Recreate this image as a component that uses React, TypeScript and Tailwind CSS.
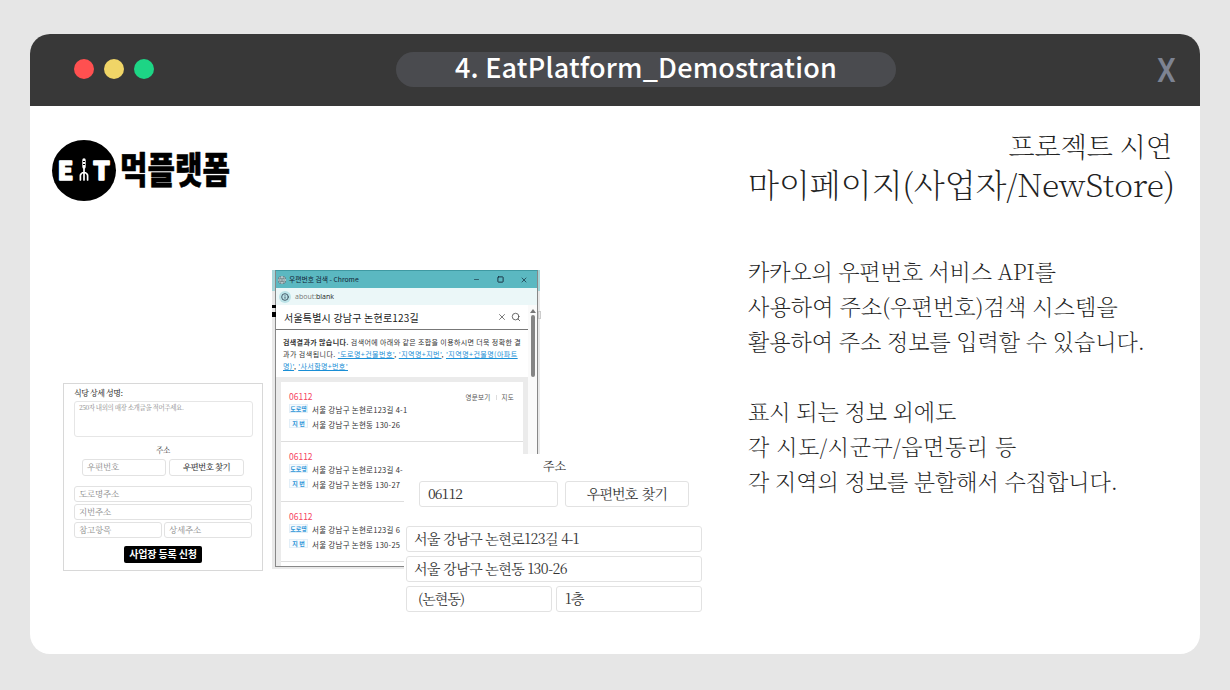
import type { ReactNode } from "react";
import { Info, Search, X, Minus, Square, Globe } from "lucide-react";

const sans = "font-['Noto_Sans_CJK_KR','Noto_Sans',sans-serif]";
const serif = "font-['Noto_Serif_CJK_KR','Liberation_Serif','Noto_Sans_CJK_KR',serif]";
const light = "font-['Noto_Serif_CJK_KR','Noto_Sans_CJK_KR',sans-serif] font-extralight";

function Field({ className = "", children }: { className?: string; children: ReactNode }) {
  return (
    <div className={`flex items-center whitespace-nowrap rounded-[3px] border border-[#e2e2e2] bg-white pb-[2px] ${className}`}>
      {children}
    </div>
  );
}

function Header() {
  return (
    <header className="flex h-[72px] shrink-0 items-center bg-[#383838] pb-[2px] pl-11 pr-[24px]">
      <div className="flex w-[322px] gap-[10px]">
        <span className="size-5 rounded-full bg-[#ff5050]" />
        <span className="size-5 rounded-full bg-[#f0d567]" />
        <span className="size-5 rounded-full bg-[#1dd585]" />
      </div>
      <div className="flex h-[35px] w-[500px] items-center justify-center rounded-full bg-[#4a4b4f] pb-[5px] text-[27px] font-medium leading-none tracking-[0.2px] text-white">
        <span className="whitespace-nowrap">4. EatPlatform_Demostration</span>
      </div>
      <span className="ml-auto origin-right scale-x-90 pt-[2px] font-['Roboto',sans-serif] text-[33px] font-medium leading-none text-[#7d8392]">X</span>
    </header>
  );
}

function Logo() {
  return (
    <div className="ml-[22px] mt-[34px] flex h-[61px] items-center">
      <svg className="h-[61px] w-[180px] overflow-visible" viewBox="0 0 180 61">
        <ellipse cx="32" cy="30.500" rx="32" ry="30.500" fill="#000" />
        <g fill="#fff" stroke="#fff" strokeWidth="1.400" strokeLinejoin="round" fontFamily="Noto Sans CJK KR, sans-serif" fontWeight="900" fontSize="25">
          <text x="5.500" y="40" textLength="16" lengthAdjust="spacingAndGlyphs">E</text>
          <text x="41" y="40" textLength="17" lengthAdjust="spacingAndGlyphs">T</text>
        </g>
        <g fill="none" stroke="#fff" strokeLinecap="round" strokeLinejoin="round">
          <path d="M32 20v7" strokeWidth="3.400" />
          <path d="M32 27v13M28.400 40v-4.500q0-2 3.600-3.500q3.600 1.500 3.600 3.500V40" strokeWidth="1.700" />
        </g>
        <path d="M31 21.500h2M31 24.500h2" stroke="#000" strokeWidth="1" />
        <text x="68" y="43.500" fontFamily="Noto Sans CJK KR, sans-serif" fontWeight="900" fontSize="37" stroke="#000" strokeWidth="0.500" strokeLinejoin="round" textLength="110" lengthAdjust="spacingAndGlyphs">먹플랫폼</text>
      </svg>
    </div>
  );
}

function RegisterForm() {
  return (
    <div className={`ml-[33px] mt-[113px] flex h-[188px] w-[200px] shrink-0 flex-col border border-[#d8d8d8] bg-white px-[10px] text-[8.500px] leading-none tracking-[-0.2px] text-[#888] ${serif}`}>
      <div className="mt-[4px] text-[8px] font-medium leading-[9px] tracking-[-0.5px] text-[#333]">식당 상세 성명:</div>
      <div className="mt-[4px] h-[36px] w-[179px] rounded-[3px] border border-[#e6e6e6] px-1 pt-[3px] text-[6.500px] tracking-[-0.4px] text-[#888]">250자 내외의 매장 소개글을 적어주세요.</div>
      <div className="mt-[8px] text-center text-[7.500px] leading-[9px] text-[#333]">주소</div>
      <div className="ml-[8px] mt-[5px] flex gap-[3px]">
        <Field className="h-[17px] w-[84px] pl-1">우편번호</Field>
        <Field className="h-[17px] w-[75px] justify-center font-medium tracking-[-0.6px] text-[#333]">우편번호 찾기</Field>
      </div>
      <div className="mt-[10px] flex w-[178px] flex-col gap-[2px]">
        <Field className="h-[16px] pl-1">도로명주소</Field>
        <Field className="h-[16px] pl-1">지번주소</Field>
        <div className="flex gap-[2px]">
          <Field className="h-[16px] w-[88px] pl-1">참고항목</Field>
          <Field className="h-[16px] w-[88px] pl-1">상세주소</Field>
        </div>
      </div>
      <div className="mx-auto mt-[8px] flex h-[17px] w-[78px] items-center justify-center whitespace-nowrap rounded-[2px] bg-black pb-[2px] font-['Noto_Sans_CJK_KR',sans-serif] text-[10px] font-bold tracking-[-0.15px] text-white">사업장 등록 신청</div>
    </div>
  );
}

function Tag({ children }: { children: ReactNode }) {
  return (
    <span className="mb-[2px] flex h-[9px] w-[19px] items-center justify-center whitespace-nowrap border border-[#e3eff8] bg-[#f7fbfe] text-[6px] font-bold leading-none tracking-normal text-[#2a94d8]">{children}</span>
  );
}

function Result({ road, lot, links = false }: { road: string; lot: string; links?: boolean }) {
  return (
    <div className="h-[60px] border-b border-[#dedede] pl-2 pr-[9px] pt-[9px] text-[7.500px] leading-none tracking-[0.27px] text-[#333]">
      <div className="flex h-[11px] items-center justify-between">
        <span className="pb-px text-[8.500px] tracking-normal text-[#f5455f]">06112</span>
        {links && <span className="flex items-center gap-[5px] pt-px text-[6.500px] text-[#555]">영문보기 <i className="h-[5px] w-px bg-[#ddd]" /> 지도</span>}
      </div>
      <div className="flex h-[15px] items-center gap-1 whitespace-nowrap"><Tag>도로명</Tag>{road}</div>
      <div className="flex h-[15px] items-center gap-1 whitespace-nowrap"><Tag>지 번</Tag>{lot}</div>
    </div>
  );
}

function Popup() {
  return (
    <div className="relative ml-[9px] flex h-[299px] w-[268px] shrink-0 flex-col border-b-2 border-l-[3px] border-r-2 border-[#e9e9e9]">
      <span className="absolute -left-[3px] top-0 h-[21px] w-[3px] bg-[#a5d5d9]" />
      <span className="absolute -right-[2px] top-0 h-[21px] w-[2px] bg-[#a5d5d9]" />
      <span className="absolute -left-[3px] top-[35px] h-[3px] w-[4px] bg-black" />
      <span className="absolute -left-[3px] top-[42px] h-[5px] w-[4px] bg-black" />
      <span className="absolute -right-[3px] top-[41px] h-[8px] w-[3px] border border-[#ccc]" />
      <div className="flex h-full flex-col overflow-hidden border border-[#888] border-t-[#3f99a2] bg-white text-[#333]">
        <div className="flex h-[17px] shrink-0 items-center bg-[#5bb8c1] pl-[2px] pr-[9px] text-[#123]">
          <Globe className="size-[8px] rounded-full bg-[#59656b] text-[#d7eef0]" strokeWidth={2} />
          <span className="ml-[3px] whitespace-nowrap text-[6.800px]">우편번호 검색 - Chrome</span>
          <Minus className="ml-auto size-[7px]" />
          <Square className="ml-[17px] size-[7px]" strokeWidth={3} />
          <X className="ml-[16px] size-[8px]" />
        </div>
        <div className="flex h-[17px] shrink-0 items-center bg-[#ebf7f8] pl-[3px] text-[7px]">
          <span className="rounded-full bg-[#bce3e8] p-[2px]"><Info className="size-[8px] text-[#345]" strokeWidth={2.5} /></span>
          <span className="ml-1 pt-px font-['Open_Sans',sans-serif] text-[#777]">about:<b className="font-medium text-[#222]">blank</b></span>
        </div>
        <div className="flex min-h-0 flex-1">
          <div className="w-[252px] shrink-0">
            <div className="flex h-[25px] items-center border-b border-[#777] pl-2 pr-[7px] text-[10px] tracking-[0.2px] text-[#222]">
              <span className="whitespace-nowrap">서울특별시 강남구 논현로123길</span>
              <X className="ml-auto size-[10px] text-[#444]" strokeWidth={1.7} />
              <Search className="ml-[4px] size-[10px] text-[#444]" strokeWidth={1.9} />
            </div>
            <div className="h-[47px] whitespace-nowrap pl-[7px] pt-[6px] text-[7px] leading-[12px] tracking-[0.37px]">
              <div><b>검색결과가 많습니다.</b> 검색어에 아래와 같은 조합을 이용하시면 더욱 정확한 결</div>
              <div className="tracking-[0.46px]">과가 검색됩니다. <Hint>'도로명+건물번호'</Hint>, <Hint>'지역명+지번'</Hint>, <Hint>'지역명+건물명(아파트</Hint></div>
              <div><Hint>명)'</Hint>, <Hint>'사서함명+번호'</Hint></div>
            </div>
            <div className="h-[189px] bg-[#ebebeb] px-[5px] pt-[5px]">
              <div className="h-full bg-white">
                <Result road="서울 강남구 논현로123길 4-1" lot="서울 강남구 논현동 130-26" links />
                <Result road="서울 강남구 논현로123길 4-" lot="서울 강남구 논현동 130-27" />
                <Result road="서울 강남구 논현로123길 6" lot="서울 강남구 논현동 130-25" />
              </div>
            </div>
          </div>
          <div className="flex flex-1 flex-col items-center bg-[#fafafa]">
            <span className="mt-[4px] border-x-[3px] border-b-[4px] border-x-transparent border-b-[#777]" />
            <span className="mt-[2px] h-[62px] w-[4px] rounded-full bg-[#858585]" />
          </div>
        </div>
      </div>
    </div>
  );
}

function Hint({ children }: { children: ReactNode }) {
  return <span className="text-[#1a8fd6] underline">{children}</span>;
}

function AddressCard() {
  return (
    <div className={`absolute left-[374px] top-[348px] h-[162px] w-[302px] bg-white pl-[2px] text-[14px] leading-none tracking-[-0.5px] text-[#333] ${serif}`}>
      <div className="flex h-[24px] items-center justify-center pr-[3px] text-[12px] tracking-normal">주소</div>
      <div className="ml-[13px] mt-[3px] flex gap-[7px]">
        <Field className="h-[26px] w-[139px] pl-[8px]"><span className="tracking-[-0.9px]">06112</span></Field>
        <Field className="h-[26px] w-[124px] justify-center tracking-[-0.8px]"><span className="[word-spacing:1.5px]">우편번호 찾기</span></Field>
      </div>
      <div className="mt-[19px] flex w-[296px] flex-col gap-[4px]">
        <Field className="h-[26px] pl-[7px]">서울 강남구 논현로123길 4-1</Field>
        <Field className="h-[26px] pl-[7px]">서울 강남구 논현동 130-26</Field>
        <div className="flex gap-[4px]">
          <Field className="h-[26px] w-[146px] pl-[11px]"><span className="tracking-[-0.9px]">(논현동)</span></Field>
          <Field className="h-[26px] w-[146px] pl-[8px]">1층</Field>
        </div>
      </div>
    </div>
  );
}

function Description() {
  return (
    <section className={`flex w-[430px] shrink-0 flex-col whitespace-nowrap text-[#222] ${light}`}>
      <div className="mr-[6px] mt-[21px] text-right text-[27px] leading-[38px]">프로젝트 시연</div>
      <h1 className="text-[32px] leading-[37px]">마이페이지(사업자/NewStore)</h1>
      <div className="mt-[51px] text-[22px] leading-[35px]">
        <p className="tracking-[-0.1px]">카카오의 우편번호 서비스 API를</p>
        <p className="tracking-[0.15px]">사용하여 주소(우편번호)검색 시스템을</p>
        <p>활용하여 주소 정보를 입력할 수 있습니다.</p>
        <p className="mt-[35px]">표시 되는 정보 외에도</p>
        <p className="tracking-[0.6px]">각 시도/시군구/읍면동리 등</p>
        <p>각 지역의 정보를 분할해서 수집합니다.</p>
      </div>
    </section>
  );
}

export default function App() {
  return (
    <div className={`h-[690px] w-[1230px] overflow-hidden bg-[#e6e6e6] px-[30px] pt-[34px] ${sans}`}>
      <div className="flex h-[620px] flex-col overflow-hidden rounded-[20px] bg-white">
        <Header />
        <main className="relative flex flex-1">
          <div className="w-[718px] shrink-0">
            <Logo />
            <div className="mt-[69px] flex items-start">
              <RegisterForm />
              <Popup />
            </div>
          </div>
          <Description />
          <AddressCard />
        </main>
      </div>
    </div>
  );
}
